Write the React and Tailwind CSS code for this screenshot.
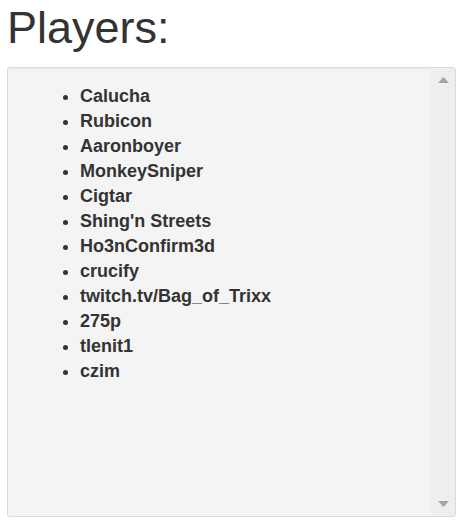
import React from "react";

const players = [
    "Calucha",
    "Rubicon",
    "Aaronboyer",
    "MonkeySniper",
    "Cigtar",
    "Shing'n Streets",
    "Ho3nConfirm3d",
    "crucify",
    "twitch.tv/Bag_of_Trixx",
    "275p",
    "tlenit1",
    "czim",
];

export default function App() {
    return (
        <div className="w-[464px] h-[529px] bg-white px-[7px] font-['Liberation_Sans',Arial,sans-serif] text-[#333]">
            {/* Title */}
            <h1 className="pt-[6px] text-[45px] leading-[44px] font-normal">
                Players:
            </h1>

            {/* Well with scroll list */}
            <div className="mt-[17px] w-[449px] h-[450px] flex border border-[#d9d9d9] rounded-[3px] bg-[#f4f4f4] shadow-[inset_0_1px_1px_rgba(0,0,0,0.05)] overflow-hidden">
                <div className="flex-1 pt-[16px] pl-[32px]">
                    <ul className="list-disc pl-[40px] text-[18px] leading-[25px] font-bold">
                        {players.map((p) => (
                            <li key={p}>{p}</li>
                        ))}
                    </ul>
                </div>

                {/* Scrollbar */}
                <div className="w-[24px] bg-[#eeeeee] flex flex-col items-center justify-between py-[9px]">
                    <svg width="11" height="6" viewBox="0 0 11 6">
                        <polygon points="5.5,0 11,6 0,6" fill="#a3a3a3" />
                    </svg>
                    <svg width="11" height="6" viewBox="0 0 11 6">
                        <polygon points="0,0 11,0 5.5,6" fill="#a3a3a3" />
                    </svg>
                </div>
            </div>
        </div>
    );
}
